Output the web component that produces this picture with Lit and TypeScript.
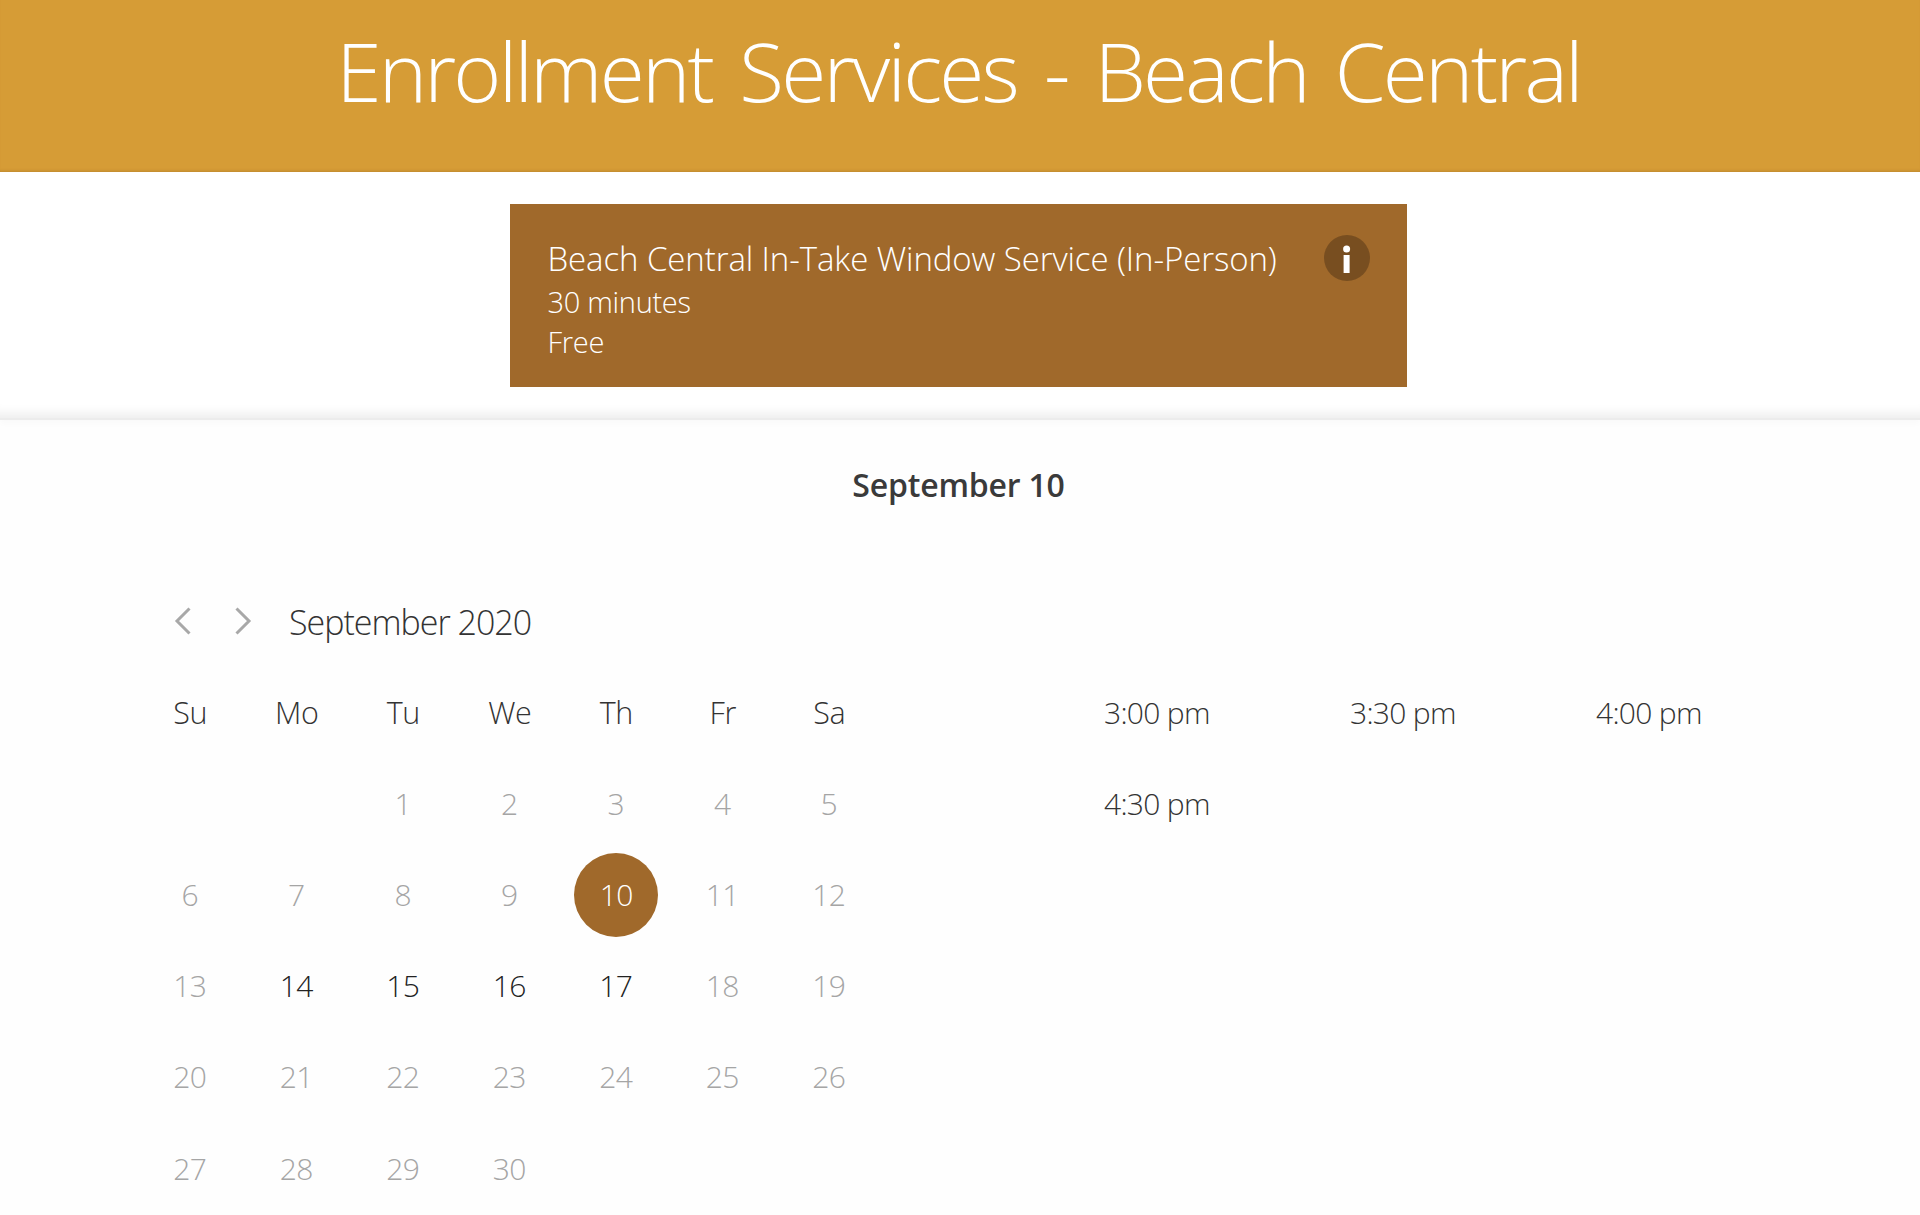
import { LitElement, html, css } from "lit";
import { customElement } from "lit/decorators.js";

const WEEKDAYS = ["Su", "Mo", "Tu", "We", "Th", "Fr", "Sa"];
const AVAILABLE = [14, 15, 16, 17];
const SELECTED = 10;
const SLOTS = ["3:00 pm", "3:30 pm", "4:00 pm", "4:30 pm"];

@customElement("app-root")
export class AppRoot extends LitElement {
  static styles = css`
    :host {
      display: block;
      width: 100%;
      min-height: 1215px;
      height: 1215px;
      overflow: hidden;
      background: #fefefe;
      color: #333;
      font-family: "Open Sans", "Noto Sans", sans-serif;
      font-weight: 300;
      font-stretch: 90%;
    }
    .banner {
      height: 172px;
      background: #d69c36;
      box-shadow: inset 0 -3px 3px -2px rgba(120, 80, 20, 0.25);
      text-align: center;
      color: #fff;
      box-sizing: border-box;
      padding-right: 3px;
    }
    .banner h1 {
      margin: 0;
      font-size: 82px;
      line-height: 140px;
      font-weight: 300;
      letter-spacing: -2.8px;
      word-spacing: 8.5px;
    }
    .top {
      height: 248px;
      box-sizing: border-box;
      padding: 32px 3px 0 0;
      background: #fff;
      border-bottom: 2px solid #ececec;
      box-shadow: inset 0 -16px 12px -12px rgba(0, 0, 0, 0.08), 0 4px 6px rgba(0, 0, 0, 0.02);
    }
    .card {
      width: 897px;
      height: 183px;
      margin: 0 auto;
      box-sizing: border-box;
      padding: 32px 37px 0 37.5px;
      background: #a0692b;
      color: #fff;
      display: flex;
      justify-content: space-between;
      align-items: flex-start;
    }
    .card .name {
      font-size: 33px;
      line-height: 46px;
      letter-spacing: -0.1px;
    }
    .card .meta {
      font-size: 29px;
      line-height: 40px;
      letter-spacing: -0.3px;
    }
    .info {
      width: 46px;
      height: 46px;
      margin-top: -1px;
      flex: none;
    }
    .date {
      margin: 0;
      padding: 45px 3px 0 0;
      text-align: center;
      font-size: 32px;
      line-height: 40px;
      font-weight: 600;
      letter-spacing: -0.2px;
      color: #3a3a3a;
    }
    .body {
      display: flex;
      align-items: flex-start;
      padding: 86px 0 0 137px;
    }
    .calendar {
      width: 745.5px;
      flex: none;
    }
    .nav {
      display: flex;
      align-items: center;
      height: 60px;
      margin-bottom: 15.6px;
    }
    .chev {
      width: 18px;
      height: 28px;
      flex: none;
      fill: none;
      stroke: #a8a8a8;
      stroke-width: 3;
    }
    .chev.prev {
      margin-left: 37px;
    }
    .chev.next {
      margin-left: 42px;
    }
    .month {
      margin-left: 37px;
      padding-top: 1px;
      font-size: 34px;
      line-height: 60px;
      letter-spacing: -1px;
      color: #333;
    }
    .grid {
      display: grid;
      grid-template-columns: repeat(7, 106.5px);
      grid-auto-rows: 91.2px;
    }
    .cell {
      display: flex;
      align-items: center;
      justify-content: center;
      box-sizing: border-box;
      padding-right: 1px;
      font-size: 30px;
      letter-spacing: -0.7px;
      color: #a5a5a5;
    }
    .cell.head {
      color: #333;
      font-size: 30.5px;
      letter-spacing: -0.4px;
      padding-right: 0;
    }
    .cell.on {
      color: #222;
      font-weight: 350;
    }
    .cell .sel {
      width: 84px;
      height: 84px;
      margin-right: -1px;
      border-radius: 50%;
      background: #a0692b;
      color: #fff;
      display: flex;
      align-items: center;
      justify-content: center;
    }
    .slots {
      display: grid;
      grid-template-columns: repeat(3, 246px);
      grid-auto-rows: 91.2px;
      margin: 75.6px 0 0 221.5px;
    }
    .slot {
      display: flex;
      align-items: center;
      font-size: 30px;
      letter-spacing: -0.7px;
      color: #333;
    }
  `;

  private renderDay(day: number) {
    if (day === SELECTED) {
      return html`<div class="cell"><span class="sel">${day}</span></div>`;
    }
    const on = AVAILABLE.includes(day);
    return html`<div class="cell ${on ? "on" : ""}">${day}</div>`;
  }

  render() {
    const days = Array.from({ length: 30 }, (_, i) => i + 1);
    return html`
      <header class="banner"><h1>Enrollment Services - Beach Central</h1></header>
      <section class="top">
        <div class="card">
          <div>
            <div class="name">Beach Central In-Take Window Service (In-Person)</div>
            <div class="meta">30 minutes</div>
            <div class="meta">Free</div>
          </div>
          <svg class="info" viewBox="0 0 46 46">
            <circle cx="23" cy="23" r="23" fill="#784e20"></circle>
            <circle cx="22.6" cy="14" r="3.5" fill="#fff"></circle>
            <rect x="19.6" y="20" width="6" height="18" fill="#fff"></rect>
          </svg>
        </div>
      </section>
      <h2 class="date">September 10</h2>
      <section class="body">
        <div class="calendar">
          <div class="nav">
            <svg class="chev prev" viewBox="0 0 18 28"><path d="M15.5 1.5 3 14l12.5 12.5"></path></svg>
            <svg class="chev next" viewBox="0 0 18 28"><path d="M2.5 1.5 15 14 2.5 26.5"></path></svg>
            <span class="month">September 2020</span>
          </div>
          <div class="grid">
            ${WEEKDAYS.map((d) => html`<div class="cell head">${d}</div>`)}
            <div class="cell"></div>
            <div class="cell"></div>
            ${days.map((d) => this.renderDay(d))}
          </div>
        </div>
        <div class="slots">
          ${SLOTS.map((s) => html`<div class="slot">${s}</div>`)}
        </div>
      </section>
    `;
  }
}
